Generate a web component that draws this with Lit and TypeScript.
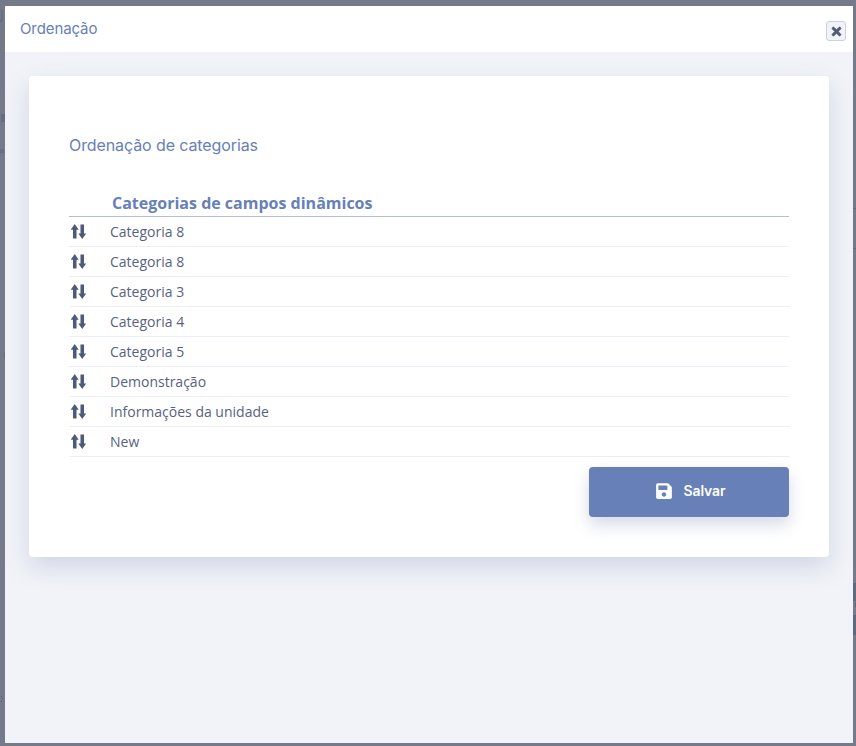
import { LitElement, html, css, svg } from "lit";
import { customElement } from "lit/decorators.js";

const rows = ["Categoria 8", "Categoria 8", "Categoria 3", "Categoria 4", "Categoria 5", "Demonstração", "Informações da unidade", "New"];

@customElement("app-root")
export class AppRoot extends LitElement {
  static styles = css`
    :host { display: block; height: 746px; box-sizing: border-box; background: #747a8a; padding: 6px 3px 3px 5px; position: relative; overflow: hidden; font-family: "Open Sans", sans-serif; }
    .trace { position: absolute; background: #5f6880; }
    .block1 { right: 0; top: 583px; width: 3px; height: 18px; }
    .block2 { right: 0; top: 615px; width: 3px; height: 20px; }
    .nub { right: 0; top: 603px; width: 1px; height: 4px; }
    .line1 { right: 0; top: 208px; width: 3px; height: 1px; background: #666e84; }
    .line2 { right: 0; top: 248px; width: 3px; height: 1px; background: #666e84; }
    .curve { left: -2px; top: 10px; width: 5px; height: 13px; box-sizing: border-box; background: none; border: 2px solid #666e86; border-top: 0; border-left: 0; border-radius: 0 0 4px 0; }
    .mark1 { left: 1px; top: 114px; width: 4px; height: 8px; background: #656d83; }
    .mark2 { left: 0; top: 149px; width: 4px; height: 4px; background: #696f85; }
    .mark3 { left: 4px; top: 352px; width: 1px; height: 7px; background: #666e86; }
    .dot1 { left: 1px; top: 696px; width: 1px; height: 1px; background: #545b6c; }
    .dot2 { left: 2px; top: 698px; width: 1px; height: 1px; background: #545b6c; }
    .dot3 { left: 1px; top: 701px; width: 1px; height: 1px; background: #545b6c; }
    .modal { height: 737px; background: #f1f3f8; display: flex; flex-direction: column; border-radius: 2px 2px 0 0; }
    .head { height: 46px; flex: none; box-sizing: border-box; background: #fff; display: flex; justify-content: space-between; padding: 14px 7px 0 15px; }
    .title { font: 400 15px/18px Inter, sans-serif; color: #6780b8; letter-spacing: -0.1px; }
    .close { width: 20px; height: 20px; margin-top: 1px; box-sizing: border-box; border: 1px solid #c9d0e4; border-radius: 3px; background: #f1f3f8; display: flex; align-items: center; justify-content: center; }
    .close svg { width: 11px; height: 13px; fill: #4e5a78; stroke: #4e5a78; stroke-width: 30; }
    .body { padding: 24px 24px 0; }
    .card { height: 481px; box-sizing: border-box; background: #fff; border-radius: 4px; padding: 58px 40px 0; box-shadow: 0 10px 24px rgba(100,115,160,.22); }
    h2 { margin: 0; font: 400 16px/22px Inter, sans-serif; color: #6780b8; letter-spacing: -0.1px; }
    .th { margin-top: 35px; height: 26px; box-sizing: border-box; padding-left: 43px; font: 700 16px/24px "Open Sans", sans-serif; color: #6780b8; border-bottom: 1px solid #b5bcd8; }
    .row { height: 30px; box-sizing: border-box; border-bottom: 1px solid #edeef5; display: flex; align-items: center; font-size: 14px; color: #58627f; padding-left: 2px; }
    .row svg { width: 15px; height: 15px; margin-right: 24px; flex: none; fill: #4e5a78; }
    .foot { display: flex; justify-content: flex-end; margin-top: 10px; }
    button { width: 200px; height: 50px; border: 0; border-radius: 4px; background: #6780b8; color: #fff; font: 600 14px/16px Inter, sans-serif; display: flex; align-items: center; justify-content: center; gap: 10px; box-shadow: 0 8px 16px rgba(100,115,160,.25); padding: 0 0 2px 3px; letter-spacing: -0.1px; }
    button svg { width: 18px; height: 18px; fill: #fff; }
  `;
  render() {
    const arrows = svg`<path d="M4 0 8.2 6H5.9V15.5H2.1V6H-.2Z"/><path d="M12 16 7.8 10H10.1V.5H13.9V10H16.2Z"/>`;
    return html`
      ${["block1", "block2", "nub", "line1", "line2", "curve", "mark1", "mark2", "mark3", "dot1", "dot2", "dot3"].map(c => html`<div class="trace ${c}"></div>`)}
      <div class="modal">
        <div class="head">
          <div class="title">Ordenação</div>
          <div class="close"><svg viewBox="0 0 352 512"><path d="M242.72 256l100.07-100.07c12.28-12.28 12.28-32.19 0-44.48l-22.24-22.24c-12.28-12.28-32.19-12.28-44.48 0L176 189.28 75.93 89.21c-12.28-12.28-32.19-12.28-44.48 0L9.21 111.45c-12.28 12.28-12.28 32.19 0 44.48L109.28 256 9.21 356.07c-12.28 12.28-12.28 32.19 0 44.48l22.24 22.24c12.28 12.28 32.2 12.28 44.48 0L176 322.72l100.07 100.07c12.28 12.28 32.2 12.28 44.48 0l22.24-22.24c12.28-12.28 12.28-32.19 0-44.48L242.72 256z"/></svg></div>
        </div>
        <div class="body">
          <div class="card">
            <h2>Ordenação de categorias</h2>
            <div class="th">Categorias de campos dinâmicos</div>
            ${rows.map(r => html`<div class="row"><svg viewBox="0 0 16 16">${arrows}</svg>${r}</div>`)}
            <div class="foot"><button><svg viewBox="0 0 448 512"><path d="M433.941 129.941l-83.882-83.882A48 48 0 0 0 316.118 32H48C21.49 32 0 53.49 0 80v352c0 26.51 21.49 48 48 48h352c26.51 0 48-21.49 48-48V163.882a48 48 0 0 0-14.059-33.941zM224 416c-35.346 0-64-28.654-64-64 0-35.346 28.654-64 64-64s64 28.654 64 64c0 35.346-28.654 64-64 64zm96-304.52V212c0 6.627-5.373 12-12 12H76c-6.627 0-12-5.373-12-12V108c0-6.627 5.373-12 12-12h228.52c3.183 0 6.235 1.264 8.485 3.515l3.48 3.48A11.996 11.996 0 0 1 320 111.48z"/></svg>Salvar</button></div>
          </div>
        </div>
      </div>`;
  }
}
